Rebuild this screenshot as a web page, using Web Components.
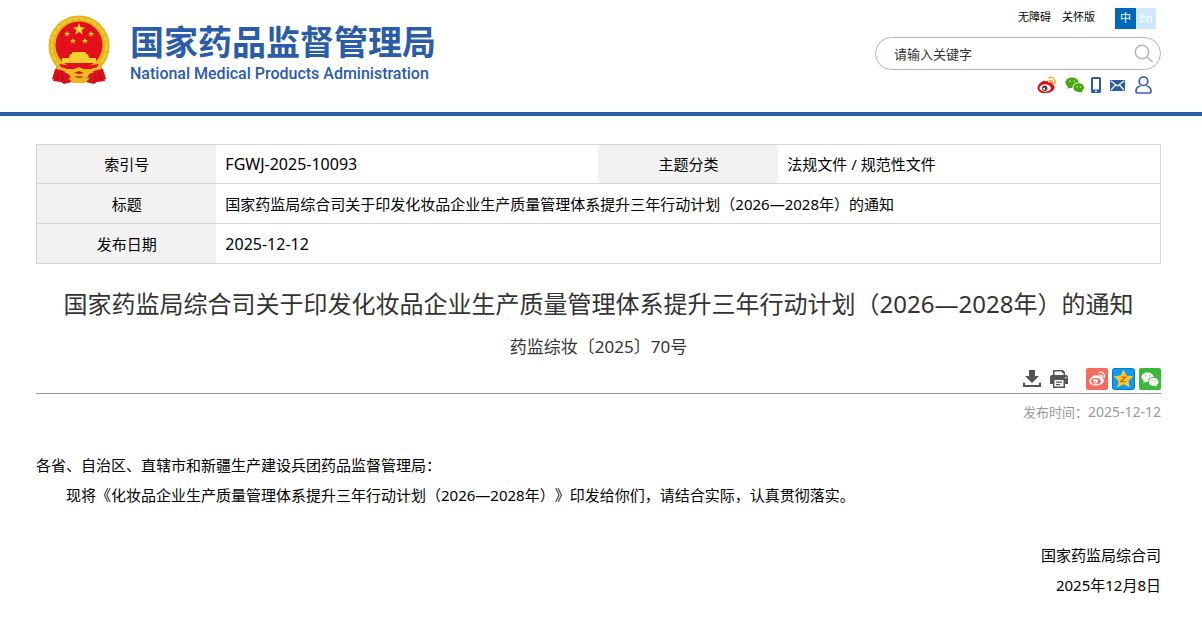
<!DOCTYPE html>
<html lang="zh-CN">
<head>
<meta charset="utf-8">
<meta name="viewport" content="width=device-width, initial-scale=1">
<title>国家药监局综合司关于印发化妆品企业生产质量管理体系提升三年行动计划（2026—2028年）的通知</title>
<style>
html{--brand:#2a5caa;--line:#d6d6d6}
body{margin:0;background:#fff;color:#000;font:15px/30px "Noto Sans","Noto Sans CJK SC",sans-serif;text-spacing-trim:space-all}
main{padding:28px 41px 24px 36px}
</style>
</head>
<body>
<site-header>
  <site-logo slot="logo"></site-logo>
  <language-links slot="tools"></language-links>
  <search-box slot="tools"></search-box>
  <social-links slot="tools"></social-links>
</site-header>
<main>
  <document-info></document-info>
  <article-heading>
    国家药监局综合司关于印发化妆品企业生产质量管理体系提升三年行动计划（2026—2028年）的通知
    <span slot="number">药监综妆〔2025〕70号</span>
  </article-heading>
  <article-tools><time slot="date" datetime="2025-12-12">2025-12-12</time></article-tools>
  <article-body>
    <span slot="to">各省、自治区、直辖市和新疆生产建设兵团药品监督管理局：</span>
    现将《化妆品企业生产质量管理体系提升三年行动计划（2026—2028年）》印发给你们，请结合实际，认真贯彻落实。
    <span slot="sender">国家药监局综合司</span>
    <span slot="date">2025年12月8日</span>
  </article-body>
</main>
<script>
const define = (name, html) => {
  const template = document.createElement('template');
  template.innerHTML = html;
  customElements.define(name, class extends HTMLElement {
    constructor() {
      super();
      this.attachShadow({mode: 'open'}).append(template.content.cloneNode(true));
    }
  });
};

define('site-header', `
<style>
:host{display:block;border-bottom:4px solid var(--brand)}
header{display:flex;justify-content:space-between;align-items:flex-start;padding:8px 41px 17px 48px}
.tools{display:flex;flex-direction:column;align-items:flex-end;flex:0 0 286px}
</style>
<header><slot name="logo"></slot><div class="tools"><slot name="tools"></slot></div></header>`);

define('site-logo', `
<style>
:host{display:block;padding-top:7px}
a{display:flex;gap:20px;color:var(--brand);text-decoration:none}
svg{flex:none}
.names{display:flex;flex-direction:column;padding-top:7px}
.zh{font-size:34px;line-height:40px;font-weight:700}
.en{font:500 16px/20px Roboto,sans-serif;padding-top:2px}
</style>
<a href="#">
<svg width="62" height="70" viewBox="0 0 62 70" role="img" aria-label="国徽">
  <path d="M9 50L5 66l8 1 3 2 8-2h14l8 2 3-2 8-1-4-16z" fill="#d8121b"/>
  <circle cx="31" cy="31" r="30.500" fill="#e5b51c"/>
  <circle cx="31" cy="31" r="27.500" fill="none" stroke="#f0cc30" stroke-width="2.500" stroke-dasharray="5 1.500"/>
  <circle cx="31" cy="30" r="23.500" fill="#e2101b"/>
  <path fill="#fbd72b" d="M31 8l1.600 4.200 4.500.2-3.500 2.800 1.200 4.300-3.800-2.500-3.800 2.500 1.200-4.300-3.500-2.800 4.500-.2z"/>
  <g fill="#f7cf2b">
    <path d="M19 16l.8 2 2.200.1-1.700 1.300.6 2.100-1.900-1.200-1.900 1.200.6-2.100-1.700-1.300 2.200-.1z"/>
    <path d="M43 16l.8 2 2.200.1-1.700 1.300.6 2.100-1.900-1.200-1.900 1.200.6-2.100-1.700-1.300 2.200-.1z"/>
    <path d="M25 23l.8 2 2.200.1-1.700 1.300.6 2.100-1.900-1.200-1.900 1.200.6-2.100-1.700-1.300 2.200-.1z"/>
    <path d="M37 23l.8 2 2.200.1-1.700 1.300.6 2.100-1.900-1.200-1.900 1.200.6-2.100-1.700-1.300 2.200-.1z"/>
    <path d="M24 37h14v2h2l1 4h7v5H14v-5h7l1-4h2z"/>
  </g>
  <path d="M11 49q20 4 40 0l-3 5H14z" fill="#e2101b"/>
  <path d="M8 52q10 0 14 4l9-4 9 4q4-4 14-4l-2 5q-9 1-14 6l-7-3-7 3q-5-5-14-6z" fill="#e9bb20"/>
  <path d="M7 54q10 1 15 6l-7 8-3-3-8-1zM55 54q-10 1-15 6l7 8 3-3 8-1z" fill="#da111c"/>
  <path d="M17 57q6 1 9 6M45 57q-6 1-9 6" stroke="#f0c528" fill="none" stroke-width="1.500"/>
  <path d="M26 58l5-2 5 2-5 1z" fill="#d8121b"/>
  <path d="M20 63l5 5h12l5-5-7-1-4 1-4-1z" fill="#e7b51e"/>
  <path d="M11 58l-2 7M15 59l-1 7M51 58l2 7M47 59l1 7" stroke="#a80b13"/>
</svg>
<span class="names"><span class="zh">国家药品监督管理局</span><span class="en">National Medical Products Administration</span></span>
</a>`);

define('language-links', `
<style>
:host{display:block;padding-right:5px}
nav{display:flex;align-items:flex-start;gap:11px;font-size:11px;line-height:18px}
a{color:#000;text-decoration:none}
.lang{display:flex;margin-left:9px;text-align:center;line-height:20px}
.lang a{width:21px;height:21px;background:#0068b7;color:#fff}
.lang a+a{width:20px;background:#cce7ff}
</style>
<nav aria-label="辅助"><a href="#">无障碍</a><a href="#">关怀版</a><span class="lang"><a href="#">中</a><a href="#">En</a></span></nav>`);

define('search-box', `
<style>
:host{display:block;align-self:stretch;padding:8px 0 5px}
form{display:flex;align-items:center;height:31px;border:1px solid #b5b5b5;border-radius:17px;padding:0 6px 0 18px}
input{flex:1;min-width:0;border:0;outline:0;padding:0;background:none;font:13px/20px "Noto Sans","Noto Sans CJK SC",sans-serif;color:#333}
input::placeholder{color:#333;opacity:1}
button{display:flex;border:0;background:none;padding:0}
</style>
<form role="search"><input type="text" aria-label="搜索" placeholder="请输入关键字"><button type="button" aria-label="搜索">
<svg width="20" height="20" viewBox="0 0 20 20" fill="none" stroke="#b5b5b5" stroke-width="1.500"><circle cx="8" cy="8" r="6.700"/><path d="M13 13l5.500 5"/></svg></button></form>`);

const weibo = (body, eye, wave) => `
  <path fill="${body}" d="M9 5.500c1.500-.9 3-.6 2.500 1.300 2-.9 4-.7 3.500 1.200 5 1.800 2.500 8.500-6 9C3.500 17.500.500 15 .5 12c0-3.500 6-9 8.500-6.500z"/>
  <ellipse cx="8.200" cy="12" rx="5.700" ry="3.700" fill="${eye}"/>
  <circle cx="7.700" cy="12.200" r="2.700" fill="${eye === '#fff' ? '#444' : body}"/>
  <circle cx="7" cy="12.700" r="1" fill="${eye}"/>
  <path d="M12 1.500c4-.8 7 2 6 6M12.500 4.500c2-.3 3.300 1 3 3" fill="none" stroke="${wave}" stroke-width="1.500" stroke-linecap="round"/>`;
const wechat = (fill, eye) => `
  <path fill="${fill}" d="M7 1.500c3.700 0 6.500 2.200 6.700 5-3.500 0-6.500 2-6.200 5.500-1 .1-2-.1-2.700-.3L2.500 13l.6-2.200C1.500 9.700.500 8.200.5 6.600.5 3.800 3.500 1.500 7 1.500z"/>
  <path fill="${fill}" d="M13.700 7.300c3 0 5.300 2 5.300 4.300 0 1.500-.8 2.700-2 3.500l.4 1.800-2-1c-4 .8-7-1.500-7-4.300 0-2.300 2.400-4.300 5.300-4.300z"/>
  <g fill="${eye}"><circle cx="5" cy="5.300" r=".8"/><circle cx="9.300" cy="5.300" r=".8"/><circle cx="12" cy="10.700" r=".7"/><circle cx="15.500" cy="10.700" r=".7"/></g>`;

define('social-links', `
<style>
:host{display:block;padding-right:9px}
nav{display:flex;align-items:center;height:20px}
a{display:flex}
a+a{margin-left:9px}
a.phone{margin-left:7px}
a.user{margin-left:10px}
</style>
<nav aria-label="社交媒体">
<a href="#" aria-label="微博"><svg width="19" height="18" viewBox="0 0 19 18">${weibo('#e01010', '#fff', '#f5ad20')}</svg></a>
<a href="#" aria-label="微信"><svg width="19" height="18" viewBox="0 0 19 18">${wechat('#45a80d', '#e8f6dd')}</svg></a>
<a class="phone" href="#" aria-label="移动端"><svg width="10" height="16" viewBox="0 0 10 16"><path fill="#2a5caa" fill-rule="evenodd" d="M1.500 0h7Q10 0 10 1.500v13q0 1.500-1.500 1.500h-7Q0 16 0 14.500v-13Q0 0 1.500 0zM2 2v10.500h6V2zM4 13.500v1.200h2v-1.200z"/></svg></a>
<a href="#" aria-label="邮箱"><svg width="15" height="11" viewBox="0 0 15 11"><rect width="15" height="11" rx="1" fill="#2a5caa"/><path d="M1 1l6.500 5L14 1M1 10l4.500-5M14 10L9.500 5" fill="none" stroke="#fff" stroke-width="1.200"/></svg></a>
<a class="user" href="#" aria-label="个人中心"><svg width="17" height="18" viewBox="0 0 17 18" fill="none" stroke="#4263b1" stroke-width="1.700"><circle cx="8.500" cy="5.200" r="4.300"/><path d="M5.500 9.700C2.500 10.500 1 12.500 1 15q0 2 2 2h11q2 0 2-2c0-2.500-1.500-4.500-4.500-5.300"/></svg></a>
</nav>`);

define('document-info', `
<style>
:host{display:block}
table{width:100%;border-collapse:collapse;table-layout:fixed;line-height:20px}
tr{border:1px solid var(--line)}
th,td{height:39px;padding:0 9px;text-align:left;font-weight:400}
tr:first-child>*{height:38px}
th{box-sizing:border-box;background:#f2f2f2;background-clip:padding-box;text-align:center}
.latin{font-size:16px}
</style>
<table>
<colgroup><col style="width:16%"><col style="width:34%"><col style="width:16%"><col></colgroup>
<tr><th scope="row">索引号</th><td class="latin">FGWJ-2025-10093</td><th scope="row">主题分类</th><td>法规文件 / 规范性文件</td></tr>
<tr><th scope="row">标题</th><td colspan="3">国家药监局综合司关于印发化妆品企业生产质量管理体系提升三年行动计划（2026—2028年）的通知</td></tr>
<tr><th scope="row">发布日期</th><td class="latin" colspan="3">2025-12-12</td></tr>
</table>`);

define('article-heading', `
<style>
:host{display:block;color:#333;text-align:center}
h1{margin:0;padding-top:20px;font-size:24px;line-height:40px;font-weight:400}
p{margin:0;padding-top:8px;font-size:17px;line-height:30px}
</style>
<h1><slot></slot></h1><p><slot name="number"></slot></p>`);

define('article-tools', `
<style>
:host{display:block;padding-top:6px}
.bar{display:flex;justify-content:flex-end;align-items:center;gap:4px;padding-bottom:3px;border-bottom:1px solid #999}
button,a{display:flex;border:0;padding:0;background:none}
.print{margin:0 14px 0 5px}
p{margin:0;padding-top:8px;text-align:right;color:#999;font-size:13px;line-height:20px}
::slotted(time){font-size:14px}
</style>
<div class="bar">
<button type="button" aria-label="下载"><svg width="18" height="18" viewBox="0 0 18 18" fill="#555"><path d="M6 0h6v6h4l-7 7-7-7h4zM0 12.500h2V15h14v-2.500h2V17H0z"/></svg></button>
<button class="print" type="button" aria-label="打印"><svg width="18" height="18" viewBox="0 0 18 18" fill="#555"><path fill-rule="evenodd" d="M3 0h10l2 2v3h1q2 0 2 2v7h-3v4H3v-4H0V7q0-2 2-2h1zm1.500 1.500V5h9V3H12V1.500zM4.500 10v6.500h9V10zM15 7v1.300h1.500V7z"/><path d="M6 11.500h6v1.300H6zM6 14h4v1.300H6z"/></svg></button>
<a href="#" aria-label="分享到微博"><svg width="22" height="22" viewBox="0 0 22 22"><rect width="22" height="22" rx="2" fill="#f56b5d"/><g transform="translate(3 3) scale(.85)">${weibo('#fff', '#f56b5d', '#fff')}</g></svg></a>
<a href="#" aria-label="分享到QQ空间"><svg width="23" height="22" viewBox="0 0 23 22"><rect x=".5" y=".5" width="22" height="21" rx="2" fill="#0d9bf0" stroke="#0878d0"/><path d="M11.500 1.500l3 6 7 .8-5 4.700 1.300 6.500-6.300-3.200-6.300 3.200L6.500 13l-5-4.700 7-.8z" fill="#fdc52b"/><path d="M7.500 9c3-.8 5-.7 7.500-.2l-4.500 4.200c2 .4 4 .4 6 0-3 1.300-6 1.400-9 .7l4.500-4z" fill="#b8650a"/></svg></a>
<a href="#" aria-label="分享到微信"><svg width="22" height="22" viewBox="0 0 22 22"><rect width="22" height="22" rx="2" fill="#3cb83f"/><g transform="translate(2 3) scale(.92)">${wechat('#fff', '#3cb83f')}</g></svg></a>
</div>
<p>发布时间：<slot name="date"></slot></p>`);

define('article-body', `
<style>
:host{display:block;padding-top:28px}
p{margin:0}
.text{text-indent:2em}
.sign{padding-top:30px;text-align:right}
</style>
<p><slot name="to"></slot></p>
<p class="text"><slot></slot></p>
<p class="sign"><slot name="sender"></slot><br><slot name="date"></slot></p>`);
</script>
</body>
</html>
